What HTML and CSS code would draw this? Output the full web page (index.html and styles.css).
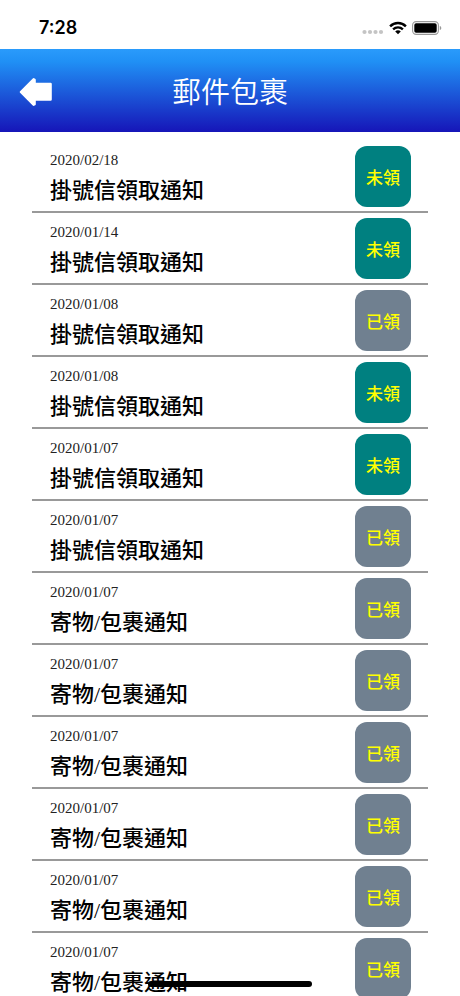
FILE: index.html
```html
<!DOCTYPE html>
<html lang="zh-Hant">
<head>
    <meta charset="UTF-8">
    <meta name="viewport" content="width=device-width, initial-scale=1.0">
    <title>郵件包裹</title>
    <link rel="stylesheet" href="styles.css">
</head>
<body>
    <div class="status-bar">
        <span class="clock">7:28</span>
        <div class="status-icons">
            <svg width="22" height="6" viewBox="0 0 22 6" fill="#c4c4c4">
                <circle cx="2.5" cy="3" r="2.1"/>
                <circle cx="8" cy="3" r="2.1"/>
                <circle cx="13.5" cy="3" r="2.1"/>
                <circle cx="19" cy="3" r="2.1"/>
            </svg>
            <svg class="wifi" width="18" height="14" viewBox="0 0 18 14" fill="none" stroke="#000" stroke-width="2.4">
                <path d="M1.1 5.3 C5.5 .9 12.5 .9 16.9 5.3"/>
                <path d="M4.1 8.4 C6.9 5.7 11.1 5.7 13.9 8.4"/>
                <path d="M9 13.2 L6.2 10.4 C7.8 9 10.2 9 11.8 10.4 Z" fill="#000" stroke="none"/>
            </svg>
            <svg width="30" height="14" viewBox="0 0 30 14">
                <rect x=".6" y=".6" width="25.8" height="12.8" rx="3.6" fill="none" stroke="#999" stroke-width="1.1"/>
                <rect x="2.3" y="2.3" width="22.4" height="9.4" rx="1.8" fill="#000"/>
                <path d="M27.8 4.9 C29.8 5.6 29.8 8.4 27.8 9.1 Z" fill="#999"/>
            </svg>
        </div>
    </div>

    <header class="header">
        <button class="back-btn" type="button" aria-label="返回">
            <svg width="34" height="30" viewBox="0 0 34 30" fill="#fff" stroke="#fff" stroke-width="2.4" stroke-linejoin="round">
                <path d="M1.9 15 L14.6 2.3 L15.6 2.8 V7 H31.6 V22.6 H15.6 V27.2 L14.6 27.7 Z"/>
            </svg>
        </button>
        <h1 class="header-title">郵件包裹</h1>
    </header>

    <main class="content">
        <ul class="mail-list">
            <li class="mail-item">
                <div class="mail-info">
                    <time class="mail-date">2020/02/18</time>
                    <h2 class="mail-title">掛號信領取通知</h2>
                </div>
                <button class="state-btn pending" type="button">未領</button>
            </li>
            <li class="mail-item">
                <div class="mail-info">
                    <time class="mail-date">2020/01/14</time>
                    <h2 class="mail-title">掛號信領取通知</h2>
                </div>
                <button class="state-btn pending" type="button">未領</button>
            </li>
            <li class="mail-item">
                <div class="mail-info">
                    <time class="mail-date">2020/01/08</time>
                    <h2 class="mail-title">掛號信領取通知</h2>
                </div>
                <button class="state-btn" type="button">已領</button>
            </li>
            <li class="mail-item">
                <div class="mail-info">
                    <time class="mail-date">2020/01/08</time>
                    <h2 class="mail-title">掛號信領取通知</h2>
                </div>
                <button class="state-btn pending" type="button">未領</button>
            </li>
            <li class="mail-item">
                <div class="mail-info">
                    <time class="mail-date">2020/01/07</time>
                    <h2 class="mail-title">掛號信領取通知</h2>
                </div>
                <button class="state-btn pending" type="button">未領</button>
            </li>
            <li class="mail-item">
                <div class="mail-info">
                    <time class="mail-date">2020/01/07</time>
                    <h2 class="mail-title">掛號信領取通知</h2>
                </div>
                <button class="state-btn" type="button">已領</button>
            </li>
            <li class="mail-item">
                <div class="mail-info">
                    <time class="mail-date">2020/01/07</time>
                    <h2 class="mail-title">寄物/包裹通知</h2>
                </div>
                <button class="state-btn" type="button">已領</button>
            </li>
            <li class="mail-item">
                <div class="mail-info">
                    <time class="mail-date">2020/01/07</time>
                    <h2 class="mail-title">寄物/包裹通知</h2>
                </div>
                <button class="state-btn" type="button">已領</button>
            </li>
            <li class="mail-item">
                <div class="mail-info">
                    <time class="mail-date">2020/01/07</time>
                    <h2 class="mail-title">寄物/包裹通知</h2>
                </div>
                <button class="state-btn" type="button">已領</button>
            </li>
            <li class="mail-item">
                <div class="mail-info">
                    <time class="mail-date">2020/01/07</time>
                    <h2 class="mail-title">寄物/包裹通知</h2>
                </div>
                <button class="state-btn" type="button">已領</button>
            </li>
            <li class="mail-item">
                <div class="mail-info">
                    <time class="mail-date">2020/01/07</time>
                    <h2 class="mail-title">寄物/包裹通知</h2>
                </div>
                <button class="state-btn" type="button">已領</button>
            </li>
            <li class="mail-item">
                <div class="mail-info">
                    <time class="mail-date">2020/01/07</time>
                    <h2 class="mail-title">寄物/包裹通知</h2>
                </div>
                <button class="state-btn" type="button">已領</button>
            </li>
        </ul>
    </main>

    <div class="home-indicator"></div>
</body>
</html>
```

FILE: styles.css
```css
* {
    margin: 0;
    padding: 0;
    box-sizing: border-box;
}

body {
    font-family: "Liberation Serif", "Noto Sans CJK TC", serif;
    background: #fff;
    color: #000;
    height: 100vh;
    display: flex;
    flex-direction: column;
    overflow: hidden;
}

.status-bar {
    display: flex;
    align-items: center;
    justify-content: space-between;
    padding: 16px 18px 9px 39px;
}

.clock {
    font-family: Inter, sans-serif;
    font-size: 18px;
    font-weight: 600;
    line-height: 24px;
}

.status-icons {
    display: flex;
    align-items: flex-end;
    gap: 5px;
}

.header {
    display: grid;
    grid-template-columns: 1fr auto 1fr;
    align-items: center;
    padding: 20px 19px;
    background: linear-gradient(#2a9bfb, #2090f5 15%, #1615b8);
}

.back-btn {
    justify-self: start;
    display: flex;
    padding: 3px 0 0;
    background: none;
    border: none;
    cursor: pointer;
}

.header-title {
    font-family: "Noto Sans CJK TC", sans-serif;
    font-size: 29px;
    font-weight: 350;
    line-height: 43px;
    color: #fff;
}

/* Scrolls under the home indicator */
.content {
    flex: 1;
    min-height: 0;
    overflow-y: auto;
    scrollbar-width: none;
    padding: 9px 32px 0;
}

.mail-list {
    list-style: none;
}

.mail-item {
    display: flex;
    align-items: center;
    justify-content: space-between;
    padding: 5px 17px 4px 18px;
    border-bottom: 2px solid #999;
}

.mail-info {
    display: flex;
    flex-direction: column;
}

.mail-date {
    font-size: 15px;
    line-height: 28px;
    color: #222;
}

.mail-title {
    font-size: 22px;
    font-weight: 500;
    line-height: 33px;
}

.state-btn {
    width: 56px;
    height: 61px;
    border: none;
    border-radius: 12px;
    background: #708090;
    color: #ff0;
    font-family: "Noto Sans CJK TC", sans-serif;
    font-size: 17px;
    font-weight: 500;
    cursor: pointer;
}

.state-btn.pending {
    background: #008080;
}

.home-indicator {
    position: fixed;
    left: 50%;
    bottom: 9px;
    width: 164px;
    height: 6px;
    border-radius: 3px;
    background: #000;
    transform: translateX(-50%);
}
```
